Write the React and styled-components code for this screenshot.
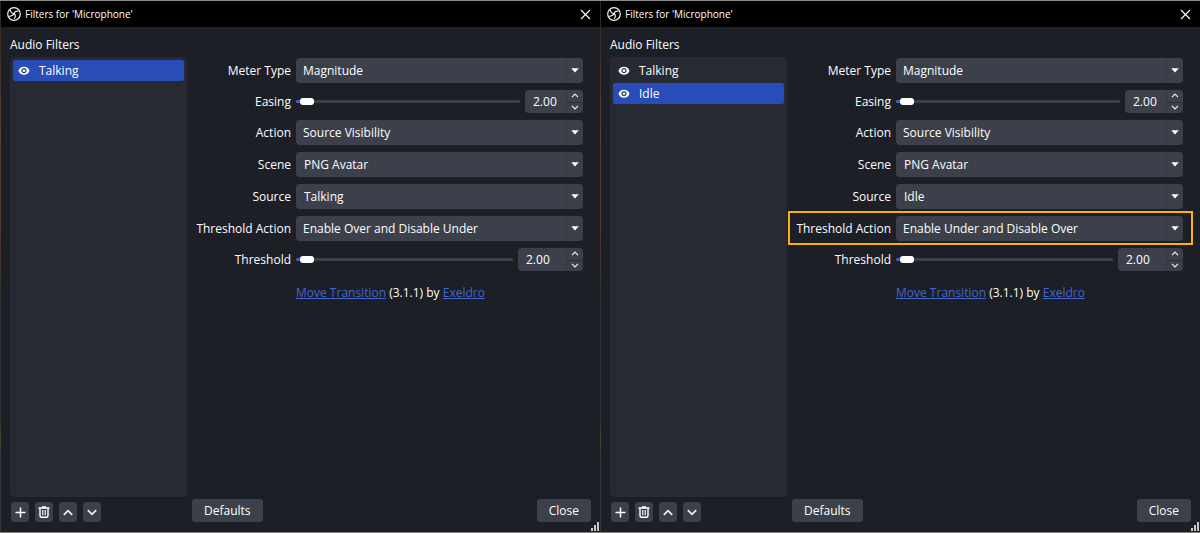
import React, { useId, useState } from "react";
import styled, { createGlobalStyle } from "styled-components";

const GlobalStyle = createGlobalStyle`
  * {
    box-sizing: border-box;
  }

  body {
    margin: 0;
    background: #1d1f26;
    color: #fefefe;
    font-family: "Open Sans", "Noto Sans", sans-serif;
    font-size: 12px;
    line-height: 16px;
  }

  button, input, select {
    margin: 0;
    border: 0;
    color: inherit;
    font: inherit;
  }
`;

const Desktop = styled.main`
  display: grid;
  grid-template-columns: 1fr 1fr;
  min-height: 100vh;
  border-top: 1px solid #8a8a8a;
  border-bottom: 1px solid #827f80;
`;

const Dialog = styled.section`
  position: relative;
  display: flex;
  flex-direction: column;
  min-width: 0;
  border-left: 1px solid;
  border-image: linear-gradient(#2c2422, #5a4034 25%, #4a3830 45%, #2c2e30 60%, #2c2e30 78%, #4c452c 82%, #33353a 86%) 1;
`;

const TitleBar = styled.header`
  display: flex;
  align-items: center;
  gap: 4px;
  height: 26px;
  padding: 0 9px 0 6px;
  background: #000;
`;

const Title = styled.h1`
  flex: 1;
  margin: 0;
  font-size: 10px;
  font-weight: 400;
`;

const CloseIcon = styled.button`
  display: flex;
  padding: 0;
  background: none;
`;

const Content = styled.div`
  flex: 1;
  display: grid;
  grid-template-columns: 177px 1fr;
  grid-template-rows: 22px 1fr 25px;
  column-gap: 5px;
  padding: 8px 9px 10px;
`;

const Heading = styled.h2`
  grid-column: 1 / -1;
  margin: 0;
  padding-top: 2px;
  font-size: 12px;
  font-weight: 400;
`;

const FilterList = styled.ul`
  display: flex;
  flex-direction: column;
  gap: 2px;
  margin: 0;
  padding: 3px;
  list-style: none;
  background: #272a33;
  border-radius: 4px;
`;

const FilterItem = styled.button`
  display: flex;
  align-items: center;
  gap: 9px;
  width: 100%;
  height: 21px;
  padding: 0 5px;
  text-align: left;
  border-radius: 2px;
  background: ${(props) => (props.$selected ? "#284cb8" : "transparent")};
`;

const Form = styled.form`
  display: flex;
  flex-direction: column;
  gap: 7px;
  padding: 1px 8px 0 0;
`;

const Row = styled.div`
  position: relative;
  display: grid;
  grid-template-columns: 99px 1fr;
  column-gap: 5px;
  align-items: center;

  ${(props) => props.$highlight && `
    &::after {
      content: "";
      position: absolute;
      inset: -5px -10px -4px -4px;
      border: 2px solid #ffae0c;
      pointer-events: none;
    }
  `}
`;

const Label = styled.label`
  text-align: right;
  white-space: nowrap;
`;

const SelectBox = styled.div`
  position: relative;
  height: 25px;
`;

const Select = styled.select`
  appearance: none;
  width: 100%;
  height: 100%;
  padding: 0 24px 0 ${(props) => (props.$editable ? 8 : 7)}px;
  background: #3c404b;
  border-radius: 4px;
`;

const SelectArrow = styled.span`
  position: absolute;
  top: 0;
  right: 0;
  bottom: 0;
  display: flex;
  align-items: center;
  justify-content: center;
  width: 17px;
  border-left: 1px solid #353944;
  pointer-events: none;
`;

const SliderRow = styled.div`
  display: flex;
  align-items: center;
  gap: 5px;
`;

const Slider = styled.input`
  appearance: none;
  flex: 1;
  min-width: 0;
  height: 7px;
  background: none;

  &::-webkit-slider-runnable-track {
    height: 3px;
    border-radius: 2px;
    background: linear-gradient(to right, #3560dc ${(props) => props.$fill}%, #3c404b ${(props) => props.$fill}%);
  }

  &::-webkit-slider-thumb {
    appearance: none;
    width: 14px;
    height: 7px;
    margin-top: -2px;
    border-radius: 3px;
    background: #fff;
  }
`;

const SpinBox = styled.div`
  display: grid;
  grid-template-columns: 1fr 17px;
  width: ${(props) => props.$width}px;
  height: 23px;
  overflow: hidden;
  background: #3c404b;
  border-radius: 4px;
`;

const SpinInput = styled.input`
  appearance: textfield;
  min-width: 0;
  padding: 0 0 0 8px;
  background: none;

  &::-webkit-inner-spin-button {
    appearance: none;
  }
`;

const SpinButtons = styled.div`
  display: grid;
  grid-template-rows: 1fr 1fr;
  border-left: 1px solid #353944;
`;

const SpinButton = styled.button`
  display: flex;
  align-items: center;
  justify-content: center;
  padding: 0;
  background: none;

  & + & {
    border-top: 1px solid #2c2f39;
  }
`;

const Credits = styled.p`
  margin: 7px 0 0 104px;
`;

const Link = styled.a`
  color: #4365cc;
`;

const ListTools = styled.div`
  display: flex;
  align-items: flex-end;
  gap: 6px;
  padding-left: 1px;
`;

const ToolButton = styled.button`
  display: flex;
  align-items: center;
  justify-content: center;
  width: 18px;
  height: 20px;
  padding: 0;
  background: #3c404b;
  border-radius: 3px;
`;

const DialogButtons = styled.div`
  display: flex;
  justify-content: space-between;
  align-items: flex-end;
`;

const Button = styled.button`
  height: 23px;
  padding: 0 12px;
  background: #3c404b;
  border-radius: 3px;
`;

const Grip = styled.svg`
  position: absolute;
  right: 1px;
  bottom: 1px;
`;

function ObsLogo() {
  return (
    <svg width="14" height="14" viewBox="0 0 14 14" fill="none" stroke="#f4f4f4" strokeWidth="1.200">
      <circle cx="7" cy="7" r="6.300" />
      <path d="M3.200 3C3.600 5 5 6.400 7.200 6.600M11.500 4.400C9.300 3.800 7.600 4.600 7.200 6.600M6.900 11.600C8.700 10.400 8.900 8.300 7.200 6.600M2 9.200C4.200 9.500 5.800 8.800 7.200 6.600" />
    </svg>
  );
}

function Eye() {
  return (
    <svg width="12" height="10" viewBox="0 0 12 10">
      <path d="M6 .7C3.400.7 1.400 2.300.4 4.700c1 2.400 3 4 5.600 4s4.600-1.600 5.600-4C10.600 2.300 8.600.7 6 .7Z" fill="#fefefe" />
      <circle cx="6" cy="4.700" r="2" fill="none" stroke="#29376e" strokeWidth="1.200" />
    </svg>
  );
}

function Chevron({ up, size = 8 }) {
  return (
    <svg width={size} height={size / 2 + 1} viewBox="0 0 8 5" fill="none" stroke="#f0f0f0" strokeWidth="1.200">
      <path d={up ? "M1 4.200 4 1.200l3 3" : "M1 .8l3 3 3-3"} />
    </svg>
  );
}

function SelectRow({ label, options, editable, highlight }) {
  const id = useId();
  return (
    <Row $highlight={highlight}>
      <Label htmlFor={id}>{label}</Label>
      <SelectBox>
        <Select id={id} $editable={editable}>
          {options.map((option) => (
            <option key={option}>{option}</option>
          ))}
        </Select>
        <SelectArrow>
          <svg width="8" height="5" viewBox="0 0 8 5">
            <path d="M.2.3h7.600L4 4.600Z" fill="#fefefe" />
          </svg>
        </SelectArrow>
      </SelectBox>
    </Row>
  );
}

function SliderField({ label, spinWidth }) {
  const id = useId();
  const [value, setValue] = useState(2);
  const step = (amount) => setValue(Math.min(100, Math.max(0, value + amount)));

  return (
    <Row>
      <Label htmlFor={id}>{label}</Label>
      <SliderRow>
        <Slider
          type="range"
          min="0"
          max="100"
          aria-label={label}
          value={value}
          $fill={value}
          onChange={(e) => setValue(Number(e.target.value))}
        />
        <SpinBox $width={spinWidth}>
          <SpinInput
            id={id}
            type="number"
            value={value.toFixed(2)}
            onChange={(e) => setValue(Number(e.target.value))}
          />
          <SpinButtons>
            <SpinButton type="button" aria-label={`Increase ${label}`} onClick={() => step(1)}>
              <Chevron up />
            </SpinButton>
            <SpinButton type="button" aria-label={`Decrease ${label}`} onClick={() => step(-1)}>
              <Chevron />
            </SpinButton>
          </SpinButtons>
        </SpinBox>
      </SliderRow>
    </Row>
  );
}

function FiltersDialog({ filters, initial, thresholdActions, highlight }) {
  const [selected, setSelected] = useState(initial);

  return (
    <Dialog>
      <TitleBar>
        <ObsLogo />
        <Title>Filters for 'Microphone'</Title>
        <CloseIcon type="button" aria-label="Close window">
          <svg width="11" height="11" viewBox="0 0 11 11" stroke="#fff" strokeWidth="1.100">
            <path d="M1 1l9 9M10 1l-9 9" />
          </svg>
        </CloseIcon>
      </TitleBar>

      <Content>
        <Heading>Audio Filters</Heading>
        <FilterList>
          {filters.map((name) => (
            <li key={name}>
              <FilterItem type="button" $selected={name === selected} onClick={() => setSelected(name)}>
                <Eye />
                {name}
              </FilterItem>
            </li>
          ))}
        </FilterList>

        <Form>
          <SelectRow label="Meter Type" options={["Magnitude"]} />
          <SliderField label="Easing" spinWidth={58} />
          <SelectRow label="Action" options={["Source Visibility"]} />
          <SelectRow label="Scene" options={["PNG Avatar"]} editable />
          <SelectRow label="Source" options={[initial]} editable />
          <SelectRow label="Threshold Action" options={thresholdActions} highlight={highlight} />
          <SliderField label="Threshold" spinWidth={65} />
          <Credits>
            <Link href="#move-transition">Move Transition</Link> (3.1.1) by <Link href="#exeldro">Exeldro</Link>
          </Credits>
        </Form>

        <ListTools>
          <ToolButton type="button" aria-label="Add filter">
            <svg width="11" height="11" viewBox="0 0 11 11" stroke="#fff" strokeWidth="1.500">
              <path d="M5.500.5v10M.5 5.500h10" />
            </svg>
          </ToolButton>
          <ToolButton type="button" aria-label="Remove filter">
            <svg width="12" height="12" viewBox="0 0 12 12" fill="none" stroke="#fff">
              <path d="M.5 2h11M4 .8h4" strokeWidth="1.300" />
              <path d="M2 2.500v7.200q0 1.500 1.500 1.500h5q1.500 0 1.500-1.500V2.500" strokeWidth="1.400" />
              <path d="M4.800 4v5.200M7.200 4v5.200" strokeWidth="1.100" />
            </svg>
          </ToolButton>
          <ToolButton type="button" aria-label="Move filter up">
            <Chevron up size={12} />
          </ToolButton>
          <ToolButton type="button" aria-label="Move filter down">
            <Chevron size={12} />
          </ToolButton>
        </ListTools>
        <DialogButtons>
          <Button type="button">Defaults</Button>
          <Button type="button">Close</Button>
        </DialogButtons>
      </Content>

      <Grip width="8" height="9" viewBox="0 0 8 9" fill="#c8c8c8" aria-hidden="true">
        <path d="M6 0h2v9H6zM3 3h2v6H3zM0 6h2v3H0z" />
      </Grip>
    </Dialog>
  );
}

export default function App() {
  return (
    <>
      <GlobalStyle />
      <Desktop>
        <FiltersDialog
          filters={["Talking"]}
          initial="Talking"
          thresholdActions={["Enable Over and Disable Under", "Enable Under and Disable Over"]}
        />
        <FiltersDialog
          filters={["Talking", "Idle"]}
          initial="Idle"
          thresholdActions={["Enable Under and Disable Over", "Enable Over and Disable Under"]}
          highlight
        />
      </Desktop>
    </>
  );
}
